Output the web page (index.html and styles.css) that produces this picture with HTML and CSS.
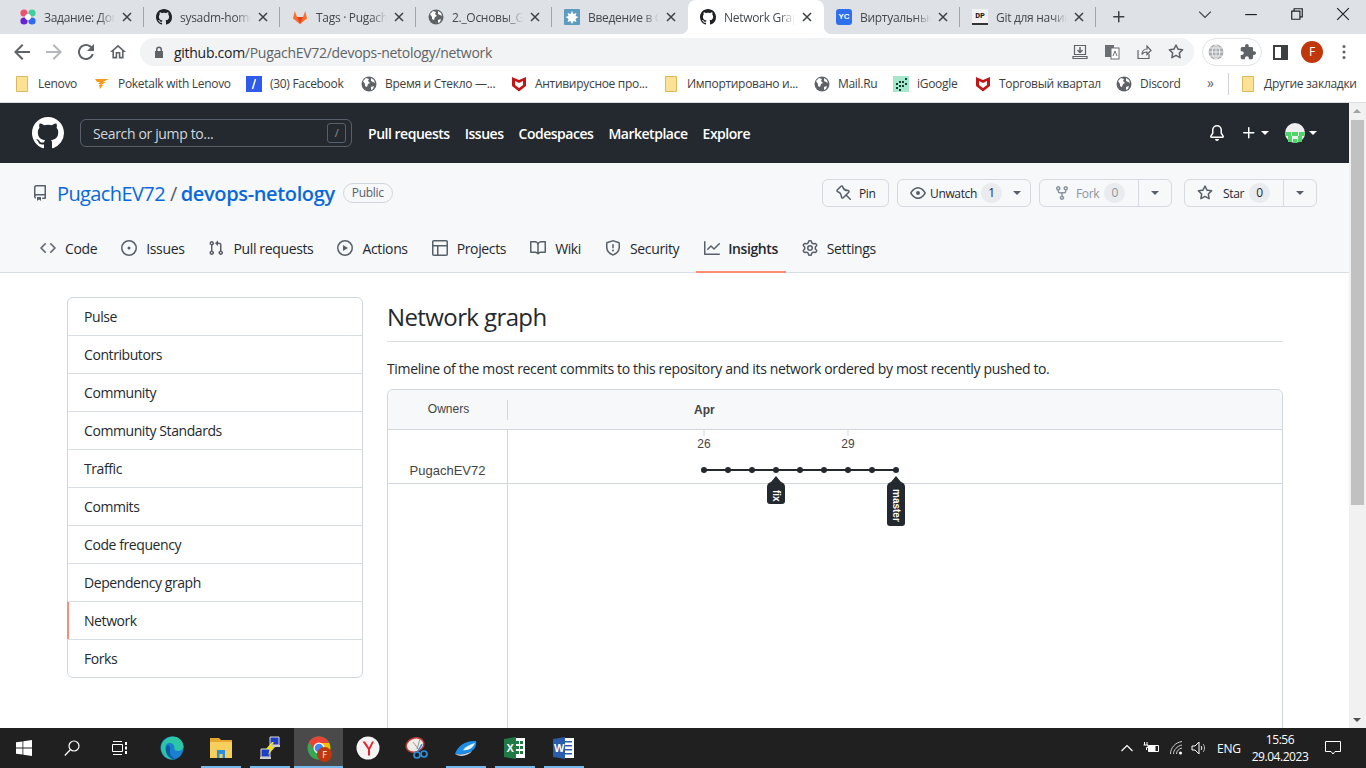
FILE: index.html
```html
<!DOCTYPE html>
<html lang="en">
<head>
<meta charset="utf-8">
<title>Network Graph</title>
<link rel="stylesheet" href="styles.css">
</head>
<body>
<svg class="defs" width="0" height="0" aria-hidden="true">
  <symbol id="i-gh" viewBox="0 0 16 16"><path d="M8 0C3.58 0 0 3.58 0 8c0 3.54 2.29 6.53 5.47 7.59.4.07.55-.17.55-.38 0-.19-.01-.82-.01-1.49-2.01.37-2.53-.49-2.69-.94-.09-.23-.48-.94-.82-1.13-.28-.15-.68-.52-.01-.53.63-.01 1.08.58 1.23.82.72 1.21 1.87.87 2.33.66.07-.52.28-.87.51-1.07-1.78-.2-3.64-.89-3.64-3.95 0-.87.31-1.59.82-2.15-.08-.2-.36-1.02.08-2.12 0 0 .67-.21 2.2.82.64-.18 1.32-.27 2-.27.68 0 1.36.09 2 .27 1.53-1.04 2.2-.82 2.2-.82.44 1.1.16 1.92.08 2.12.51.56.82 1.27.82 2.15 0 3.07-1.87 3.75-3.65 3.95.29.25.54.73.54 1.48 0 1.07-.01 1.93-.01 2.2 0 .21.15.46.55.38A8.013 8.013 0 0016 8c0-4.42-3.58-8-8-8z"/></symbol>
  <symbol id="i-repo" viewBox="0 0 16 16"><path d="M2 2.5A2.5 2.5 0 014.5 0h8.75a.75.75 0 01.75.75v12.5a.75.75 0 01-.75.75h-2.5a.75.75 0 110-1.5h1.75v-2h-8a1 1 0 00-.714 1.7.75.75 0 01-1.072 1.05A2.495 2.495 0 012 11.5v-9zm10.5-1V9h-8c-.356 0-.694.074-1 .208V2.5a1 1 0 011-1h8zM5 12.25v3.25a.25.25 0 00.4.2l1.45-1.087a.25.25 0 01.3 0L8.6 15.7a.25.25 0 00.4-.2v-3.25a.25.25 0 00-.25-.25h-3.5a.25.25 0 00-.25.25z"/></symbol>
  <symbol id="i-code" viewBox="0 0 16 16"><path d="M4.72 3.22a.75.75 0 011.06 1.06L2.06 8l3.72 3.72a.75.75 0 11-1.06 1.06L.47 8.53a.75.75 0 010-1.06l4.25-4.25zm6.56 0a.75.75 0 10-1.06 1.06L13.94 8l-3.72 3.72a.75.75 0 101.06 1.06l4.25-4.25a.75.75 0 000-1.06l-4.25-4.25z"/></symbol>
  <symbol id="i-issue" viewBox="0 0 16 16"><path d="M8 9.5a1.5 1.5 0 100-3 1.5 1.5 0 000 3z"/><path d="M8 0a8 8 0 100 16A8 8 0 008 0zM1.5 8a6.5 6.5 0 1113 0 6.5 6.5 0 01-13 0z"/></symbol>
  <symbol id="i-pr" viewBox="0 0 16 16"><path d="M7.177 3.073L9.573.677A.25.25 0 0110 .854v4.792a.25.25 0 01-.427.177L7.177 3.427a.25.25 0 010-.354zM3.75 2.5a.75.75 0 100 1.5.75.75 0 000-1.5zm-2.25.75a2.25 2.25 0 113 2.122v5.256a2.251 2.251 0 11-1.5 0V5.372A2.25 2.25 0 011.5 3.25zM11 2.5h-1V4h1a1 1 0 011 1v5.628a2.251 2.251 0 101.5 0V5A2.5 2.5 0 0011 2.5zm1 10.25a.75.75 0 111.5 0 .75.75 0 01-1.5 0zM3.75 12a.75.75 0 100 1.5.75.75 0 000-1.5z"/></symbol>
  <symbol id="i-play" viewBox="0 0 16 16"><path d="M1.5 8a6.5 6.5 0 1113 0 6.5 6.5 0 01-13 0zM8 0a8 8 0 100 16A8 8 0 008 0zM6.379 5.227A.25.25 0 006 5.442v5.117a.25.25 0 00.379.214l4.264-2.559a.25.25 0 000-.428L6.379 5.227z"/></symbol>
  <symbol id="i-table" viewBox="0 0 16 16"><path d="M0 1.75C0 .784.784 0 1.75 0h12.5C15.216 0 16 .784 16 1.75v12.5A1.75 1.75 0 0114.25 16H1.75A1.75 1.75 0 010 14.25V1.75zM6.5 6.5v8h7.75a.25.25 0 00.25-.25V6.5h-8zM5 6.5H1.5v7.75c0 .138.112.25.25.25H5v-8zM14.5 5V1.75a.25.25 0 00-.25-.25H1.75a.25.25 0 00-.25.25V5h13z"/></symbol>
  <symbol id="i-book" viewBox="0 0 16 16"><path d="M0 1.75A.75.75 0 01.75 1h4.253c1.227 0 2.317.59 3 1.501A3.744 3.744 0 0111.006 1h4.245a.75.75 0 01.75.75v10.5a.75.75 0 01-.75.75h-4.507a2.25 2.25 0 00-1.591.659l-.622.621a.75.75 0 01-1.06 0l-.622-.621A2.25 2.25 0 005.258 13H.75a.75.75 0 01-.75-.75V1.75zm8.755 3a2.25 2.25 0 012.25-2.25H14.5v9h-3.757c-.71 0-1.4.201-1.992.572l.004-7.322zm-1.504 7.324l.004-5.073-.002-2.253A2.25 2.25 0 005.003 2.5H1.5v9h3.757a3.75 3.75 0 011.994.574z"/></symbol>
  <symbol id="i-shield" viewBox="0 0 16 16"><path d="M7.467.133a1.75 1.75 0 011.066 0l5.25 1.68A1.75 1.75 0 0115 3.48V7c0 1.566-.32 3.182-1.303 4.682-.983 1.498-2.585 2.813-5.032 3.855a1.7 1.7 0 01-1.33 0c-2.447-1.042-4.049-2.357-5.032-3.855C1.32 10.182 1 8.566 1 7V3.48a1.75 1.75 0 011.217-1.667l5.25-1.68zm.61 1.429a.25.25 0 00-.153 0l-5.25 1.68a.25.25 0 00-.174.238V7c0 1.358.275 2.666 1.057 3.86.784 1.194 2.121 2.34 4.366 3.297a.2.2 0 00.154 0c2.245-.956 3.582-2.104 4.366-3.298C13.225 9.666 13.5 8.36 13.5 7V3.48a.25.25 0 00-.174-.237l-5.25-1.68zM9 10.5a1 1 0 11-2 0 1 1 0 012 0zm-.25-5.75a.75.75 0 10-1.5 0v3a.75.75 0 001.5 0v-3z"/></symbol>
  <symbol id="i-graph" viewBox="0 0 16 16"><path d="M1.5 1.75a.75.75 0 00-1.5 0v12.5c0 .414.336.75.75.75h14.5a.75.75 0 000-1.5H1.5V1.75zm14.28 2.53a.75.75 0 00-1.06-1.06L10 7.94 7.53 5.47a.75.75 0 00-1.06 0L3.22 8.72a.75.75 0 001.06 1.06L7 7.06l2.47 2.47a.75.75 0 001.06 0l5.25-5.25z"/></symbol>
  <symbol id="i-gear" viewBox="0 0 16 16"><path d="M7.429 1.525a6.593 6.593 0 011.142 0c.036.003.108.036.137.146l.289 1.105c.147.56.55.967.997 1.189.174.086.341.183.501.29.417.278.97.423 1.53.27l1.102-.303c.11-.03.175.016.195.046.219.31.41.641.573.989.014.031.022.11-.059.19l-.815.806c-.411.406-.562.957-.53 1.456a4.588 4.588 0 010 .582c-.032.499.119 1.05.53 1.456l.815.806c.08.08.073.159.059.19a6.494 6.494 0 01-.573.99c-.02.029-.086.074-.195.045l-1.103-.303c-.559-.153-1.112-.008-1.529.27-.16.107-.327.204-.5.29-.449.222-.851.628-.998 1.189l-.289 1.105c-.029.11-.101.143-.137.146a6.613 6.613 0 01-1.142 0c-.036-.003-.108-.037-.137-.146l-.289-1.105c-.147-.56-.55-.967-.997-1.189a4.502 4.502 0 01-.501-.29c-.417-.278-.97-.423-1.53-.27l-1.102.303c-.11.03-.175-.016-.195-.046a6.492 6.492 0 01-.573-.989c-.014-.031-.022-.11.059-.19l.815-.806c.411-.406.562-.957.53-1.456a4.587 4.587 0 010-.582c.032-.499-.119-1.05-.53-1.456l-.815-.806c-.08-.08-.073-.159-.059-.19a6.44 6.44 0 01.573-.99c.02-.029.086-.075.195-.045l1.103.303c.559.153 1.112.008 1.529-.27.16-.107.327-.204.5-.29.449-.222.851-.628.998-1.189l.289-1.105c.029-.11.101-.143.137-.146zM8 0c-.236 0-.47.01-.701.03-.743.065-1.29.615-1.458 1.261l-.29 1.106c-.017.066-.078.158-.211.224a5.994 5.994 0 00-.668.386c-.123.082-.233.09-.3.071L3.27 2.776c-.644-.177-1.392.02-1.82.63a7.977 7.977 0 00-.704 1.217c-.315.675-.111 1.422.363 1.891l.815.806c.05.048.098.147.088.294a6.084 6.084 0 000 .772c.01.147-.038.246-.088.294l-.815.806c-.474.469-.678 1.216-.363 1.891.2.428.436.835.704 1.218.428.609 1.176.806 1.82.63l1.103-.303c.066-.019.176-.011.299.071.213.143.436.272.668.386.133.066.194.158.212.224l.289 1.106c.169.646.715 1.196 1.458 1.26a8.094 8.094 0 001.402 0c.743-.064 1.29-.614 1.458-1.26l.29-1.106c.017-.066.078-.158.211-.224a5.98 5.98 0 00.668-.386c.123-.082.233-.09.3-.071l1.102.302c.644.177 1.392-.02 1.82-.63.268-.382.505-.789.704-1.217.315-.675.111-1.422-.364-1.891l-.814-.806c-.05-.048-.098-.147-.088-.294a6.1 6.1 0 000-.772c-.01-.147.039-.246.088-.294l.814-.806c.475-.469.679-1.216.364-1.891a7.992 7.992 0 00-.704-1.218c-.428-.609-1.176-.806-1.82-.63l-1.103.303c-.066.019-.176.011-.299-.071a5.991 5.991 0 00-.668-.386c-.133-.066-.194-.158-.212-.224L10.16 1.29C9.99.645 9.444.095 8.701.031A8.094 8.094 0 008 0zm1.5 8a1.5 1.5 0 11-3 0 1.5 1.5 0 013 0zM11 8a3 3 0 11-6 0 3 3 0 016 0z"/></symbol>
  <symbol id="i-bell" viewBox="0 0 16 16"><path d="M8 16a2 2 0 001.985-1.75c.017-.137-.097-.25-.235-.25h-3.5c-.138 0-.252.113-.235.25A2 2 0 008 16z"/><path d="M8 1.5A3.5 3.5 0 004.5 5v2.947c0 .346-.102.683-.294.97l-1.703 2.556a.018.018 0 00-.003.01l.001.006c0 .002.002.004.004.006a.017.017 0 00.006.004l.007.001h10.964l.007-.001a.016.016 0 00.006-.004.016.016 0 00.004-.006l.001-.007a.017.017 0 00-.003-.01l-1.703-2.554a1.75 1.75 0 01-.294-.97V5A3.5 3.5 0 008 1.5zM3 5a5 5 0 0110 0v2.947c0 .05.015.098.042.139l1.703 2.555A1.518 1.518 0 0113.482 13H2.518a1.518 1.518 0 01-1.263-2.36l1.703-2.554A.25.25 0 003 7.947V5z"/></symbol>
  <symbol id="i-plus" viewBox="0 0 16 16"><path d="M7.75 2a.75.75 0 01.75.75V7h4.25a.75.75 0 110 1.5H8.5v4.25a.75.75 0 11-1.5 0V8.5H2.75a.75.75 0 010-1.5H7V2.75A.75.75 0 017.75 2z"/></symbol>
  <symbol id="i-pin" viewBox="0 0 16 16"><path d="M4.456.734a1.75 1.75 0 012.826.504l.613 1.327a3.081 3.081 0 002.084 1.707l2.454.584c1.332.317 1.8 1.972.832 2.94L11.06 10l3.72 3.72a.75.75 0 11-1.06 1.06L10 11.06l-2.204 2.205c-.968.968-2.623.5-2.94-.832l-.584-2.454a3.081 3.081 0 00-1.707-2.084l-1.327-.613a1.75 1.75 0 01-.504-2.826L4.456.734zM5.92 1.866a.25.25 0 00-.404-.072L1.794 5.516a.25.25 0 00.072.404l1.328.613A4.582 4.582 0 015.73 9.63l.584 2.454a.25.25 0 00.42.12l5.47-5.47a.25.25 0 00-.12-.42L9.63 6.13a4.583 4.583 0 01-3.098-2.537L5.92 1.866z"/></symbol>
  <symbol id="i-eye" viewBox="0 0 16 16"><path d="M1.679 7.932c.412-.621 1.242-1.75 2.366-2.717C5.175 4.242 6.527 3.5 8 3.5c1.473 0 2.824.742 3.955 1.715 1.124.967 1.954 2.096 2.366 2.717a.119.119 0 010 .136c-.412.621-1.242 1.75-2.366 2.717C10.825 11.758 9.473 12.5 8 12.5c-1.473 0-2.824-.742-3.955-1.715C2.92 9.818 2.09 8.69 1.679 8.068a.119.119 0 010-.136zM8 2c-1.981 0-3.67.992-4.933 2.078C1.797 5.169.88 6.423.43 7.1a1.619 1.619 0 000 1.798c.45.678 1.367 1.932 2.637 3.024C4.329 13.008 6.019 14 8 14c1.981 0 3.67-.992 4.933-2.078 1.27-1.091 2.187-2.345 2.637-3.023a1.619 1.619 0 000-1.798c-.45-.678-1.367-1.932-2.637-3.023C11.671 2.992 9.981 2 8 2zm0 8a2 2 0 100-4 2 2 0 000 4z"/></symbol>
  <symbol id="i-fork" viewBox="0 0 16 16"><path d="M5 3.25a.75.75 0 11-1.5 0 .75.75 0 011.5 0zm0 2.122a2.25 2.25 0 10-1.5 0v.878A2.25 2.25 0 005.75 8.5h1.5v2.128a2.251 2.251 0 101.5 0V8.5h1.5a2.25 2.25 0 002.25-2.25v-.878a2.25 2.25 0 10-1.5 0v.878a.75.75 0 01-.75.75h-4.5A.75.75 0 015 6.25v-.878zm3.75 7.378a.75.75 0 11-1.5 0 .75.75 0 011.5 0zm3-8.75a.75.75 0 100-1.5.75.75 0 000 1.5z"/></symbol>
  <symbol id="i-star" viewBox="0 0 16 16"><path d="M8 .25a.75.75 0 01.673.418l1.882 3.815 4.21.612a.75.75 0 01.416 1.279l-3.046 2.97.719 4.192a.75.75 0 01-1.088.791L8 12.347l-3.766 1.98a.75.75 0 01-1.088-.79l.72-4.194L.818 6.374a.75.75 0 01.416-1.28l4.21-.611L7.327.668A.75.75 0 018 .25zm0 2.445L6.615 5.5a.75.75 0 01-.564.41l-3.097.45 2.24 2.184a.75.75 0 01.216.664l-.528 3.084 2.769-1.456a.75.75 0 01.698 0l2.77 1.456-.53-3.084a.75.75 0 01.216-.664l2.24-2.183-3.096-.45a.75.75 0 01-.564-.41L8 2.694v.001z"/></symbol>
  <symbol id="i-globe" viewBox="0 0 16 16"><circle cx="8" cy="8" r="7.5" fill="#5f6368"/><path d="M2 5l3-3 3 1-1 2 2 2-2 1-1 3-2-1V8zM10 2l3 2 1 3-2-1-2-1zM10 11l3-1-1 3-2 1z" fill="#fff"/></symbol>
  <symbol id="i-folder" viewBox="0 0 12 16"><path d="M.5.500h11v15H.5z" fill="#fde293" stroke="#d9b95f"/></symbol>
  <symbol id="i-mcafee" viewBox="0 0 16 16"><path d="M1 1l7 3 7-3v9l-7 5.500-7-5.500z" fill="#c01818"/><path d="M4 5l4 2 4-2v4l-4 3-4-3z" fill="#fff"/></symbol>
  <symbol id="i-x" viewBox="0 0 10 10"><path d="M1 1l8 8M9 1l-8 8" fill="none" stroke="#3c4043" stroke-width="1.500"/></symbol>
</svg>

<header class="chrome">
  <div class="tabstrip">
    <div class="tab"><svg class="fav" viewBox="0 0 16 16"><circle cx="4" cy="4" r="3.600" fill="#f0506e"/><circle cx="12" cy="4" r="3.600" fill="#3fcf9f"/><circle cx="4" cy="12" r="3.600" fill="#6a1fd6"/><circle cx="12" cy="12" r="3.600" fill="#2d6bf0"/><circle cx="8" cy="8" r="3" fill="#fff"/></svg><span class="tab-title">Задание: Дом</span><svg class="tab-x"><use href="#i-x"/></svg></div>
    <div class="tab"><svg class="fav dark"><use href="#i-gh"/></svg><span class="tab-title">sysadm-home</span><svg class="tab-x"><use href="#i-x"/></svg></div>
    <div class="tab"><svg class="fav" viewBox="0 0 16 16"><path d="M8 15L1 9.500 2.700 2 5 8h6l2.300-6L15 9.500z" fill="#fc6d26"/><path d="M8 15L5 8h6z" fill="#e24329"/></svg><span class="tab-title">Tags · Pugach</span><svg class="tab-x"><use href="#i-x"/></svg></div>
    <div class="tab"><svg class="fav"><use href="#i-globe"/></svg><span class="tab-title">2._Основы_G</span><svg class="tab-x"><use href="#i-x"/></svg></div>
    <div class="tab no-sep"><svg class="fav" viewBox="0 0 16 16"><rect width="16" height="16" rx="1" fill="#5d9cc0"/><path d="M8 2l1.500 3 3-1-1 3 3 1-3 2 1 3-3-1-1.500 3-1.500-3-3 1 1-3-3-2 3-1-1-3 3 1z" fill="#fff"/></svg><span class="tab-title">Введение в G</span><svg class="tab-x"><use href="#i-x"/></svg></div>
    <div class="tab active"><svg class="fav dark"><use href="#i-gh"/></svg><span class="tab-title">Network Grap</span><svg class="tab-x"><use href="#i-x"/></svg></div>
    <div class="tab"><span class="fav yc">YC</span><span class="tab-title">Виртуальные</span><svg class="tab-x"><use href="#i-x"/></svg></div>
    <div class="tab"><span class="fav dp">DP</span><span class="tab-title">Git для начин</span><svg class="tab-x"><use href="#i-x"/></svg></div>
    <svg class="new-tab"><use href="#i-plus"/></svg>
    <div class="win-btns">
      <svg class="win" viewBox="0 0 12 12"><path d="M1 4l5 5 5-5" fill="none" stroke="#3c4043"/></svg>
      <svg class="win" viewBox="0 0 12 12"><path d="M1 6.500h10" stroke="#202124"/></svg>
      <svg class="win" viewBox="0 0 12 12"><path d="M1.500 3.500h7v7h-7zM3.500 3.500v-2h7v7h-2" fill="none" stroke="#202124"/></svg>
      <svg class="win" viewBox="0 0 12 12"><path d="M1 1l10 10M11 1L1 11" stroke="#202124"/></svg>
    </div>
  </div>
  <div class="toolbar">
    <svg class="nav-ic" viewBox="4 4 16 16"><path d="M20 11H7.830l5.590-5.590L12 4l-8 8 8 8 1.410-1.410L7.830 13H20v-2z" fill="#5f6368"/></svg>
    <svg class="nav-ic" viewBox="4 4 16 16"><path d="M12 4l-1.410 1.410L16.170 11H4v2h12.170l-5.580 5.590L12 20l8-8z" fill="#b4b7bb"/></svg>
    <svg class="nav-ic" viewBox="4 4 16 16"><path d="M17.650 6.350C16.200 4.900 14.210 4 12 4c-4.420 0-7.990 3.580-7.990 8s3.570 8 7.990 8c3.730 0 6.840-2.550 7.730-6h-2.080c-.82 2.330-3.040 4-5.650 4-3.310 0-6-2.690-6-6s2.690-6 6-6c1.660 0 3.140.69 4.220 1.780L13 11h7V4l-2.350 2.350z" fill="#5f6368"/></svg>
    <svg class="nav-ic" viewBox="2 2 20 20"><path d="M12 5.690l5 4.500V18h-2v-6H9v6H7v-7.810l5-4.500M12 3L2 12h3v8h6v-6h2v6h6v-8h3L12 3z" fill="#5f6368"/></svg>
    <div class="omni">
      <svg class="lock" viewBox="0 0 10 12"><path d="M2 5V3.500a3 3 0 016 0V5h1v7H1V5zm1.500 0h3V3.500a1.500 1.500 0 00-3 0z" fill="#5f6368"/></svg>
      <span class="url"><span class="url-host">github.com</span>/PugachEV72/devops-netology/network</span>
      <div class="omni-icons">
        <svg class="om" viewBox="0 0 16 16"><path d="M2.500 1.500h11v9h-11zM1 14.500h14v-2H1z" fill="none" stroke="#5f6368" stroke-width="1.200"/><path d="M8 3v5M5.500 6L8 8.500 10.500 6" fill="none" stroke="#5f6368" stroke-width="1.400"/></svg>
        <svg class="om" viewBox="0 0 16 16"><rect x="1" y="1" width="9" height="12" fill="#6b6f73"/><rect x="7" y="4" width="8" height="11" fill="#fff" stroke="#6b6f73"/><path d="M9 12l2-5 2 5" fill="none" stroke="#6b6f73"/></svg>
        <svg class="om" viewBox="0 0 16 16"><path d="M2 6v8.500h11V10M6 10.500C6 7 8.500 5 11 5V2l4 4.500L11 10.500V8c-2 0-4 .5-5 2.500z" fill="none" stroke="#5f6368" stroke-width="1.200"/></svg>
        <svg class="om" viewBox="0 0 16 16"><use href="#i-star" fill="#5f6368"/></svg>
      </div>
    </div>
    <div class="ext-pill">
      <svg class="ext" viewBox="0 0 16 16"><circle cx="8" cy="8" r="7.500" fill="#a9abae"/><path d="M.5 8h15M8 .5v15M2 4h12M2 12h12M8 .5c-5 4-5 11 0 15M8 .5c5 4 5 11 0 15" fill="none" stroke="#fff" stroke-width=".8"/></svg>
      <svg class="ext" viewBox="1 1 22 22"><path d="M20.500 11H19V7c0-1.100-.9-2-2-2h-4V3.500C13 2.120 11.880 1 10.500 1S8 2.120 8 3.500V5H4c-1.100 0-1.990.9-1.990 2v3.800H3.500c1.490 0 2.700 1.210 2.700 2.700s-1.210 2.700-2.700 2.700H2V20c0 1.100.9 2 2 2h3.800v-1.500c0-1.490 1.210-2.700 2.700-2.700 1.490 0 2.700 1.210 2.700 2.700V22H17c1.100 0 2-.9 2-2v-4h1.500c1.380 0 2.500-1.120 2.500-2.500S21.880 11 20.500 11z" fill="#5f6368"/></svg>
    </div>
    <svg class="side" viewBox="0 0 15 15"><path d="M1 1h13v13H1z" fill="none" stroke="#3c4043" stroke-width="2"/><path d="M8 1h6v13H8z" fill="#3c4043"/></svg>
    <span class="profile">F</span>
    <svg class="dots" viewBox="0 0 4 16"><circle cx="2" cy="2.500" r="1.500"/><circle cx="2" cy="8" r="1.500"/><circle cx="2" cy="13.500" r="1.500"/></svg>
  </div>
  <div class="bookmarks">
    <div class="bm"><svg class="bm-ic folder"><use href="#i-folder"/></svg><span>Lenovo</span></div>
    <div class="bm"><svg class="bm-ic" viewBox="0 0 16 16"><path d="M1 3h14l-6 3h3l-5 3h2l-3 4-1-4 2-1H4l2-2H3z" fill="#f39a1f"/></svg><span>Poketalk with Lenovo</span></div>
    <div class="bm"><svg class="bm-ic" viewBox="0 0 16 16"><rect width="16" height="16" fill="#2e5bea"/><path d="M9.500 3L6.500 13" stroke="#fff" stroke-width="1.500"/></svg><span>(30) Facebook</span></div>
    <div class="bm"><svg class="bm-ic"><use href="#i-globe"/></svg><span>Время и Стекло —...</span></div>
    <div class="bm"><svg class="bm-ic"><use href="#i-mcafee"/></svg><span>Антивирусное про...</span></div>
    <div class="bm"><svg class="bm-ic folder"><use href="#i-folder"/></svg><span>Импортировано и...</span></div>
    <div class="bm"><svg class="bm-ic"><use href="#i-globe"/></svg><span>Mail.Ru</span></div>
    <div class="bm"><svg class="bm-ic" viewBox="0 0 16 16"><rect width="16" height="16" fill="#a6e6c9"/><path d="M3 7h2v2H3zM3 11h2v2H3zM6 9h2v2H6zM6 13h2v2H6zM9 5h2v2H9zM9 9h2v2H9zM12 2h2v2h-2zM12 7h2v2h-2zM6 5h2v2H6z" fill="#123f36"/></svg><span>iGoogle</span></div>
    <div class="bm"><svg class="bm-ic"><use href="#i-mcafee"/></svg><span>Торговый квартал</span></div>
    <div class="bm"><svg class="bm-ic"><use href="#i-globe"/></svg><span>Discord</span></div>
    <div class="bm-more">»</div>
    <div class="bm bm-other"><svg class="bm-ic folder"><use href="#i-folder"/></svg><span>Другие закладки</span></div>
  </div>
</header>

<div class="viewport">
  <div class="page">
    <div class="gh-header">
      <svg class="gh-logo"><use href="#i-gh"/></svg>
      <div class="search"><span>Search or jump to...</span><span class="slash">/</span></div>
      <nav class="gh-nav"><span>Pull requests</span><span>Issues</span><span>Codespaces</span><span>Marketplace</span><span>Explore</span></nav>
      <div class="gh-right">
        <svg class="ic16 bell"><use href="#i-bell"/></svg>
        <svg class="ic16 plus"><use href="#i-plus"/></svg><i class="caret"></i>
        <svg class="avatar" viewBox="0 0 20 20"><circle cx="10" cy="10" r="10" fill="#efefef"/><path d="M0 9h6v4H1zM7 9h6v4H7zM14 9h6l-1 4h-5zM3 13h4v6H3zM13 13h4v6h-4zM8 16h4v4H8z" fill="#4fd66a"/></svg><i class="caret"></i>
      </div>
    </div>
    <div class="repohead">
      <div class="repo-top">
        <div class="repo-title">
          <svg class="ic16 muted"><use href="#i-repo"/></svg>
          <a class="owner">PugachEV72</a><span class="sl">/</span><a class="name">devops-netology</a>
          <span class="pill">Public</span>
        </div>
        <div class="actions">
          <div class="btn b-pin"><svg class="ic16 muted"><use href="#i-pin"/></svg><span>Pin</span></div>
          <div class="btn b-watch"><svg class="ic16 muted"><use href="#i-eye"/></svg><span>Unwatch</span><span class="count">1</span><i class="caret dk"></i></div>
          <div class="btn b-split b-fork"><div class="seg"><svg class="ic16 faint"><use href="#i-fork"/></svg><span class="off">Fork</span><span class="count off">0</span></div><div class="seg-c"><i class="caret dk"></i></div></div>
          <div class="btn b-split b-star"><div class="seg"><svg class="ic16 muted"><use href="#i-star"/></svg><span>Star</span><span class="count">0</span></div><div class="seg-c"><i class="caret dk"></i></div></div>
        </div>
      </div>
      <nav class="repo-tabs">
        <a class="rt"><svg class="ic16 muted"><use href="#i-code"/></svg>Code</a>
        <a class="rt"><svg class="ic16 muted"><use href="#i-issue"/></svg>Issues</a>
        <a class="rt"><svg class="ic16 muted"><use href="#i-pr"/></svg>Pull requests</a>
        <a class="rt"><svg class="ic16 muted"><use href="#i-play"/></svg>Actions</a>
        <a class="rt"><svg class="ic16 muted"><use href="#i-table"/></svg>Projects</a>
        <a class="rt"><svg class="ic16 muted"><use href="#i-book"/></svg>Wiki</a>
        <a class="rt"><svg class="ic16 muted"><use href="#i-shield"/></svg>Security</a>
        <a class="rt on"><svg class="ic16 muted"><use href="#i-graph"/></svg>Insights</a>
        <a class="rt"><svg class="ic16 muted"><use href="#i-gear"/></svg>Settings</a>
      </nav>
    </div>
    <div class="layout">
      <ul class="side-menu">
        <li>Pulse</li><li>Contributors</li><li>Community</li><li>Community Standards</li><li>Traffic</li><li>Commits</li><li>Code frequency</li><li>Dependency graph</li><li class="sel">Network</li><li>Forks</li>
      </ul>
      <main class="content">
        <h1>Network graph</h1>
        <p>Timeline of the most recent commits to this repository and its network ordered by most recently pushed to.</p>
        <div class="graph">
          <div class="g-head"><div class="g-owners">Owners</div></div>
          <div class="g-body">
            <div class="g-names"><div class="g-name">PugachEV72</div></div>
            <div class="g-rowline"></div>
          </div>
          <svg class="g-canvas" viewBox="508 390 774 338" width="774" height="338">
            <text class="g-month" x="694" y="414">Apr</text>
            <path d="M704 430v6M848 430v6" stroke="#d0d7de"/>
            <text class="g-day" x="704" y="448" text-anchor="middle">26</text>
            <text class="g-day" x="848" y="448" text-anchor="middle">29</text>
            <path d="M704 470H896" stroke="#24292f" stroke-width="2"/>
            <g fill="#24292f">
              <circle cx="704" cy="470" r="3"/><circle cx="728" cy="470" r="3"/><circle cx="752" cy="470" r="3"/><circle cx="776" cy="470" r="3"/><circle cx="800" cy="470" r="3"/><circle cx="824" cy="470" r="3"/><circle cx="848" cy="470" r="3"/><circle cx="872" cy="470" r="3"/><circle cx="896" cy="470" r="3"/>
              <path d="M776 476l5 6q4 1 4 5v14q0 3-3 3h-12q-3 0-3-3v-14q0-4 4-5z"/>
              <path d="M896 476l5 6q4 1 4 5v36q0 3-3 3h-12q-3 0-3-3v-36q0-4 4-5z"/>
            </g>
            <text class="g-tag" transform="translate(773 490) rotate(90)">fix</text>
            <text class="g-tag" transform="translate(893 489) rotate(90)">master</text>
          </svg>
        </div>
      </main>
    </div>
  </div>
  <div class="scrollbar">
    <i class="sb-up"></i>
    <div class="sb-thumb"></div>
    <i class="sb-down"></i>
  </div>
</div>

<footer class="taskbar">
  <div class="tb t-win"><svg class="tb-ic" viewBox="0 0 16 16"><path d="M0 2.300l6.500-.9v6.200H0zM7.300 1.300L16 0v7.600H7.300zM0 8.400h6.500v6.200L0 13.700zM7.300 8.400H16V16l-8.700-1.200z" fill="#fff"/></svg></div>
  <div class="tb t-search"><svg class="tb-ic" viewBox="0 0 16 16"><circle cx="10" cy="6" r="5" fill="none" stroke="#fff" stroke-width="1.200"/><path d="M6.500 9.500L.8 15.500" stroke="#fff" stroke-width="1.200"/></svg></div>
  <div class="tb t-view"><svg class="tb-ic" viewBox="0 0 16 16"><path d="M.5 4.500h10v7H.5zM1 1.500h9M1 14.500h9" fill="none" stroke="#fff"/><path d="M13 2h2v3h-2zM13 6.500h2v3h-2zM13 11h2v3h-2z" fill="#fff"/></svg></div>
  <div class="tb-apps">
    <div class="tb"><svg class="app" viewBox="0 0 24 24"><circle cx="12" cy="12" r="11.500" fill="#1b7fd0"/><path d="M1 11C2 4 8 .5 13 .5c6 0 10.500 5 10.500 10 0 3-2.500 4.500-5.500 4.500-3 0-4-1.500-3.500-3C15 9 11 6 7.500 7.500 4.500 9 5 14 7 17c2 3 6 6 9 6-8 2-15-3-15-12z" fill="#2bc6a6"/><path d="M8 9c-3 2-3 8 1 12 2 2 5 3 7 2-4-1-7-5-6-9 0-2 0-4-2-5z" fill="#0c59a4"/></svg></div>
    <div class="tb run"><svg class="app" viewBox="0 0 24 24"><path d="M1 2h9l2 2h11v3H1z" fill="#e6a92f"/><path d="M1 6h22v16H1z" fill="#f7cf5c"/><path d="M8 14h8v8h-2.500v-4h-3v4H8z" fill="#2a8fd8"/></svg></div>
    <div class="tb run"><svg class="app" viewBox="0 0 24 24"><path d="M12 1h9v8h-9zM3 13h9v8H3z" fill="#1d3fc8" stroke="#ddd"/><path d="M2 21h11v2H2zM13 9h9v2h-9z" fill="#ccc"/><path d="M14 6l-6 7h4l-2 6 7-8h-4l3-5z" fill="#f4e01f"/></svg></div>
    <div class="tb active-app"><svg class="app" viewBox="0 0 24 24"><circle cx="12" cy="12" r="11.500" fill="#34a853"/><path d="M12 .5A11.500 11.500 0 002 6l5.500 9L12 7h10A11.500 11.500 0 0012 .5z" fill="#ea4335"/><path d="M22.200 7H12l5 9-5 7.500A11.500 11.500 0 0022.200 7z" fill="#fbbc05"/><circle cx="12" cy="12" r="5.500" fill="#fff"/><circle cx="12" cy="12" r="4.300" fill="#4285f4"/></svg><span class="app-badge">F</span></div>
    <div class="tb"><svg class="app" viewBox="0 0 24 24"><circle cx="12" cy="12" r="11.500" fill="#f4f4f4"/><path d="M6.500 5.500l5.500 8v6h2v-6l4-8h-2l-3 6-4-6z" fill="#e8202a"/></svg></div>
    <div class="tb"><svg class="app" viewBox="0 0 24 24"><ellipse cx="10" cy="9" rx="9" ry="7" fill="#f0ece6" stroke="#c83a3a" stroke-width="1.500" transform="rotate(-20 10 9)"/><path d="M8 6l6 8M15 3l-3 10" stroke="#999"/><circle cx="12" cy="19" r="3" fill="none" stroke="#2b8fe0" stroke-width="1.700"/><circle cx="19" cy="18" r="3" fill="none" stroke="#2b8fe0" stroke-width="1.700"/><path d="M13 15l4-7" stroke="#2b8fe0" stroke-width="1.500"/></svg></div>
    <div class="tb run"><svg class="app" viewBox="0 0 24 24"><path d="M1 18C3 10 12 4 22 5c1 3-1 9-6 11-5 2-11 3-15 2z" fill="#1a8ee8"/><path d="M9 14c3-4 8-6 12-7-2 5-7 8-12 7z" fill="#e4f4ff"/><path d="M1 18c6 1 12 0 17-3-3 4-11 7-17 3z" fill="#d0d8e0"/></svg></div>
    <div class="tb run"><svg class="app" viewBox="0 0 24 24"><path d="M9 2h13v20H9z" fill="#fff"/><path d="M13 5h3v3h-3zM17 5h3v3h-3zM13 10h3v3h-3zM17 10h3v3h-3zM13 15h3v3h-3zM17 15h3v3h-3z" fill="#1f7a45"/><path d="M1 3l12-2v22L1 21z" fill="#1f7a45"/><text class="xl" x="3.500" y="16">X</text></svg></div>
    <div class="tb run"><svg class="app" viewBox="0 0 24 24"><path d="M9 2h13v20H9z" fill="#fff"/><path d="M13 5h7v1.500h-7zM13 9h7v1.500h-7zM13 13h7v1.500h-7zM13 17h7v1.500h-7z" fill="#2b5bab"/><path d="M1 3l12-2v22L1 21z" fill="#2b5bab"/><text class="xl" x="2" y="16">W</text></svg></div>
  </div>
  <div class="tray">
    <svg class="tr-up" viewBox="0 0 12 8"><path d="M.5 7L6 1.500 11.500 7" fill="none" stroke="#fff" stroke-width="1.200"/></svg>
    <svg class="tr-bat" viewBox="0 0 16 12"><path d="M1.500 0v3M4 0v3M.5 3h4.500v2.500H3.500V8" fill="none" stroke="#fff"/><path d="M5.500 3.500h10v6h-10z" fill="#202020" stroke="#fff"/><path d="M5.500 3.500h7v6h-7z" fill="#fff"/></svg>
    <svg class="tr-wifi" viewBox="0 0 14 14"><path d="M.5 13C.5 7 5 1.500 12 .5M3.500 13c0-4 3.500-8 8.500-9M6.500 13c0-3 2.500-5.500 5.500-6" fill="none" stroke="#cfcfcf"/><circle cx="10.500" cy="12" r="1.500" fill="#fff"/></svg>
    <svg class="tr-vol" viewBox="0 0 16 14"><path d="M1 5h3l4-4v12L4 9H1z" fill="none" stroke="#fff"/><path d="M10 5c1 1 1 3 0 4" fill="none" stroke="#fff"/><path d="M12 3c2 2 2 6 0 8" fill="none" stroke="#bbb"/></svg>
    <span class="tr-lang">ENG</span>
    <div class="clock"><span>15:56</span><span>29.04.2023</span></div>
    <svg class="tr-note" viewBox="0 0 16 14"><path d="M.5.500h15v10H10l-2 2.500-2-2.500H.5z" fill="none" stroke="#fff"/></svg>
  </div>
</footer>
</body>
</html>
```
FILE: styles.css
```css
* { box-sizing: border-box; }
html, body { margin: 0; height: 100%; }
body {
  width: 1366px; height: 768px; overflow: hidden;
  display: flex; flex-direction: column;
  font-family: "Open Sans", "Noto Sans", sans-serif;
  font-size: 14px; color: #24292f; letter-spacing: -.36px;
  background: #fff;
}
.defs { position: absolute; }
svg { display: block; flex: none; fill-rule: evenodd; }
a { color: inherit; text-decoration: none; }

/* Browser chrome */
.chrome { flex: none; height: 103px; font-size: 12px; color: #3c4043; letter-spacing: -.3px; border-bottom: 1px solid #dadce0; }
.tabstrip { height: 34px; background: #dee1e6; padding-left: 8px; display: flex; align-items: stretch; }
.tab { width: 136px; display: flex; align-items: center; padding: 0 12px; position: relative; color: #45494e; }
.tab::after { content: ""; position: absolute; right: 0; top: 7px; height: 20px; width: 1px; background: #a2a5aa; }
.tab.no-sep::after { display: none; }
.tab.active { background: #fff; border-radius: 8px 8px 0 0; }
.tab.active::before, .tab.active::after { content: ""; position: absolute; top: auto; bottom: 0; width: 8px; height: 8px; background: radial-gradient(circle at 0 0, transparent 8px, #fff 8.500px); }
.tab.active::before { left: -8px; }
.tab.active::after { right: -8px; background: radial-gradient(circle at 100% 0, transparent 8px, #fff 8.500px); }
.fav { width: 16px; height: 16px; flex: none; margin-right: 8px; }
.fav.dark { fill: #202124; }
.yc { background: #2f6fed; color: #fff; border-radius: 3px; font: bold 8px/16px "Liberation Sans", sans-serif; text-align: center; letter-spacing: 0; }
.dp { background: #f2f2f2; color: #111; font: bold 8px/13px "Liberation Mono", monospace; text-align: center; letter-spacing: 0; border-bottom: 2px solid #333; }
.tab-title { flex: 1; overflow: hidden; white-space: nowrap; -webkit-mask-image: linear-gradient(90deg, #000 78%, transparent 100%); mask-image: linear-gradient(90deg, #000 78%, transparent 100%); }
.tab-x { width: 10px; height: 10px; flex: none; margin-left: 7px; }
.new-tab { width: 16px; height: 16px; margin: 9px 0 0 15px; fill: #3c4043; }
.win-btns { margin-left: auto; display: flex; }
.win { width: 46px; height: 14px; margin-top: 7px; }

.toolbar { height: 36px; background: #fff; display: flex; align-items: center; padding-left: 14px; }
.nav-ic { width: 16px; height: 16px; margin-right: 16px; }
.nav-ic:nth-child(4) { margin-right: 14px; }
.omni { width: 1054px; height: 28px; border-radius: 14px; background: #f1f3f4; display: flex; align-items: center; padding-left: 14px; font-size: 14px; letter-spacing: -.28px; color: #5f6368; }
.lock { width: 10px; height: 12px; margin-right: 10px; }
.url { white-space: nowrap; }
.url-host { color: #202124; }
.omni-icons { margin-left: auto; display: flex; gap: 16px; padding-right: 10px; }
.om { width: 16px; height: 16px; }
.ext-pill { width: 60px; height: 28px; margin-left: 8px; border: 1px solid #e0e3e7; border-radius: 14px; display: flex; align-items: center; gap: 16px; padding-left: 5px; }
.ext { width: 16px; height: 16px; }
.side { width: 15px; height: 15px; margin-left: 11px; }
.profile { width: 22px; height: 22px; margin-left: 13px; border-radius: 50%; background: #c1370c; color: #fff; font-size: 12px; text-align: center; line-height: 22px; flex: none; }
.dots { width: 4px; height: 16px; margin-left: 19px; fill: #5f6368; }

.bookmarks { height: 32px; padding: 0 0 5px 16px; background: #fff; display: grid; grid-template-columns: 78px 152px 115px 150px 154px 149px 79px 82px 141px 91px 22px auto; align-items: center; white-space: nowrap; }
.bm { display: flex; align-items: center; gap: 8px; overflow: hidden; }
.bm-ic { width: 16px; height: 16px; }
.bm-ic.folder { width: 12px; height: 16px; margin-right: 2px; }
.bm-more { font-size: 14px; color: #5f6368; border-right: 1px solid #d0d3d7; height: 22px; line-height: 20px; }
.bm-other { padding-left: 13px; }

/* Page viewport */
.viewport { flex: 1; min-height: 0; display: flex; }
.page { flex: 1; min-width: 0; overflow: hidden; }
.scrollbar { width: 17px; background: #f1f1f1; position: relative; padding-top: 17px; }
.sb-thumb { width: 13px; height: 385px; margin-left: 2px; background: #c1c1c1; }
.sb-up, .sb-down { position: absolute; left: 4px; width: 0; height: 0; border-left: 4px solid transparent; border-right: 4px solid transparent; }
.sb-up { top: 6px; border-bottom: 4px solid #a3a3a3; }
.sb-down { bottom: 6px; border-top: 4px solid #505050; }

.gh-header { height: 60px; background: #24292f; display: flex; align-items: center; padding: 0 32px; color: #fff; position: relative; }
.gh-logo { width: 32px; height: 32px; fill: #fff; margin-right: 16px; }
.search { width: 272px; height: 28px; border: 1px solid #57606a; border-radius: 6px; display: flex; align-items: center; justify-content: space-between; padding: 0 5px 0 12px; color: #d0d7de; }
.slash { width: 19px; height: 20px; border: 1px solid #57606a; border-radius: 3px; font-size: 11px; line-height: 17px; text-align: center; color: #8c959f; }
.gh-nav { display: flex; gap: 15px; margin-left: 16px; font-weight: 600; letter-spacing: -.48px; }
.gh-right { margin-left: auto; display: flex; align-items: center; }
.ic16 { width: 16px; height: 16px; }
.bell, .plus { fill: #fff; }
.plus { margin-left: 16px; }
.caret { width: 0; height: 0; display: block; border-left: 4px solid transparent; border-right: 4px solid transparent; border-top: 4px solid #fff; }
.gh-right > .caret { margin-left: 4px; }
.avatar { width: 20px; height: 20px; margin-left: 16px; }
.caret.dk { border-top-color: #57606a; }

.repohead { height: 110px; background: #f6f8fa; border-bottom: 1px solid #d8dee4; display: flex; flex-direction: column; }
.repo-top { height: 62px; display: flex; justify-content: space-between; padding: 16px 32px 0; }
.repo-title { display: flex; align-items: center; height: 28px; font-size: 20px; color: #0969da; letter-spacing: -.6px; }
.muted { fill: #57606a; }
.faint { fill: #8c959f; }
.owner { margin-left: 9px; }
.sl { color: #57606a; margin: 0 4px 0 5px; }
.name { font-weight: 600; letter-spacing: -.36px; }
.pill { margin-left: 8px; height: 20px; padding: 0 8px; font-size: 12px; line-height: 18px; font-weight: 500; color: #57606a; border: 1px solid #d0d7de; border-radius: 10px; letter-spacing: -.3px; }
.actions { display: flex; }
.btn { height: 28px; border: 1px solid #d5dae0; border-radius: 6px; display: flex; align-items: center; font-size: 12px; font-weight: 500; background: #f6f8fa; color: #24292f; letter-spacing: -.35px; }
.b-pin { width: 67px; padding-left: 13px; gap: 7px; }
.b-watch { width: 134px; margin-left: 8px; padding-left: 12px; gap: 4px; }
.b-fork { width: 133px; margin-left: 8px; }
.b-star { width: 133px; margin-left: 12px; }
.count { width: 21px; height: 20px; border-radius: 10px; background: #e9ebee; text-align: center; line-height: 20px; font-weight: 500; }
.b-watch .caret { margin-left: 7px; }
.seg { display: flex; align-items: center; height: 100%; border-right: 1px solid #d5dae0; }
.seg-c { flex: 1; display: flex; justify-content: center; }
.b-fork .seg { width: 99px; gap: 5px; padding-left: 14px; }
.b-star .seg { width: 99px; gap: 5px; padding-left: 12px; }
.b-star .seg span:first-of-type { margin-left: 5px; }
.b-fork .seg span:first-of-type { margin-left: 1px; }
.off { color: #8c959f; }

.repo-tabs { display: flex; gap: 8px; padding-left: 32px; height: 48px; }
.rt { display: flex; align-items: center; gap: 9px; padding: 0 8px; height: 48px; position: relative; color: #24292f; }
.rt.on { font-weight: 600; gap: 8px; letter-spacing: -.42px; margin-left: 1px; }
.rt.on::after { content: ""; position: absolute; left: 0; right: 0; bottom: -1px; height: 2px; background: #fd8c73; }

.layout { width: 1216px; margin: 24px 0 0 67px; display: grid; grid-template-columns: 296px 896px; gap: 24px; }
.side-menu { list-style: none; margin: 0; padding: 0; border: 1px solid #d0d7de; border-radius: 6px; height: 381px; letter-spacing: -.42px; }
.side-menu li { height: 38px; padding-left: 16px; line-height: 38px; border-top: 1px solid #d8dee4; position: relative; }
.side-menu li:first-child { border-top: 0; height: 37px; line-height: 37px; }
.side-menu .sel::before { content: ""; position: absolute; left: -1px; top: 0; bottom: 0; width: 2px; background: #fd8c73; }
.content { min-width: 0; }
h1 { margin: 0; height: 45px; font-size: 24px; font-weight: 400; line-height: 40px; border-bottom: 1px solid #d8dee4; letter-spacing: -.6px; }
.content p { margin: 16px 0 10px; height: 21px; line-height: 21px; }
.graph { position: relative; border: 1px solid #d0d7de; border-radius: 6px 6px 0 0; height: 400px; font-family: "Liberation Sans", Arial, sans-serif; letter-spacing: 0; color: #444; }
.g-head { height: 40px; background: #f6f8fa; border-bottom: 1px solid #d0d7de; padding-top: 10px; border-radius: 6px 6px 0 0; }
.g-owners { width: 120px; height: 20px; padding-left: 2px; border-right: 1px solid #d0d7de; text-align: center; font-size: 12px; line-height: 19px; }
.g-body { position: relative; height: 359px; }
.g-names { width: 120px; height: 100%; border-right: 1px solid #d0d7de; padding-top: 32px; text-align: center; font-size: 13px; line-height: 17px; }
.g-rowline { position: absolute; left: 0; right: 0; top: 53px; height: 1px; background: #d0d7de; }
.g-canvas { position: absolute; left: 120px; top: 0; }
.g-month { font: bold 12px "Liberation Sans", Arial, sans-serif; fill: #444; }
.g-day { font: 12px "Liberation Sans", Arial, sans-serif; fill: #444; }
.g-tag { font: bold 10px "Liberation Sans", Arial, sans-serif; fill: #fff; }

/* Taskbar */
.taskbar { flex: none; height: 40px; background: #202020; display: flex; align-items: center; position: relative; color: #fff; font-size: 12px; letter-spacing: -.3px; }
.tb { height: 40px; display: flex; align-items: center; justify-content: center; position: relative; }
.t-win, .t-search, .t-view { width: 48px; }
.tb-ic { width: 16px; height: 16px; }
.tb-apps { display: grid; grid-template-columns: repeat(9, 49px); margin-left: 3px; }
.app { width: 24px; height: 24px; }
.run::after { content: ""; position: absolute; left: 5px; right: 4px; bottom: 0; height: 2px; background: #76b9ed; }
.active-app { background: #4a4a4a; }
.active-app::after { content: ""; position: absolute; left: 0; right: 0; bottom: 0; height: 2px; background: #76b9ed; }
.app-badge { position: absolute; left: 23px; top: 19px; width: 15px; height: 15px; border-radius: 50%; background: #c1370c; font-size: 9px; line-height: 15px; text-align: center; }
.xl { font: bold 11px "Liberation Sans", sans-serif; fill: #fff; }
.tray { margin-left: auto; display: flex; align-items: center; height: 40px; }
.tr-up { width: 12px; height: 8px; }
.tr-bat { width: 16px; height: 12px; margin-left: 10px; }
.tr-wifi { width: 14px; height: 14px; margin-left: 11px; }
.tr-vol { width: 16px; height: 14px; margin-left: 7px; }
.tr-lang { width: 24px; margin-left: 10px; white-space: nowrap; letter-spacing: -.2px; }
.clock { width: 76px; margin-left: 1px; display: flex; flex-direction: column; align-items: center; line-height: 17px; letter-spacing: -.45px; }
.tr-note { width: 16px; height: 14px; margin: 0 25px 0 7px; }
```
